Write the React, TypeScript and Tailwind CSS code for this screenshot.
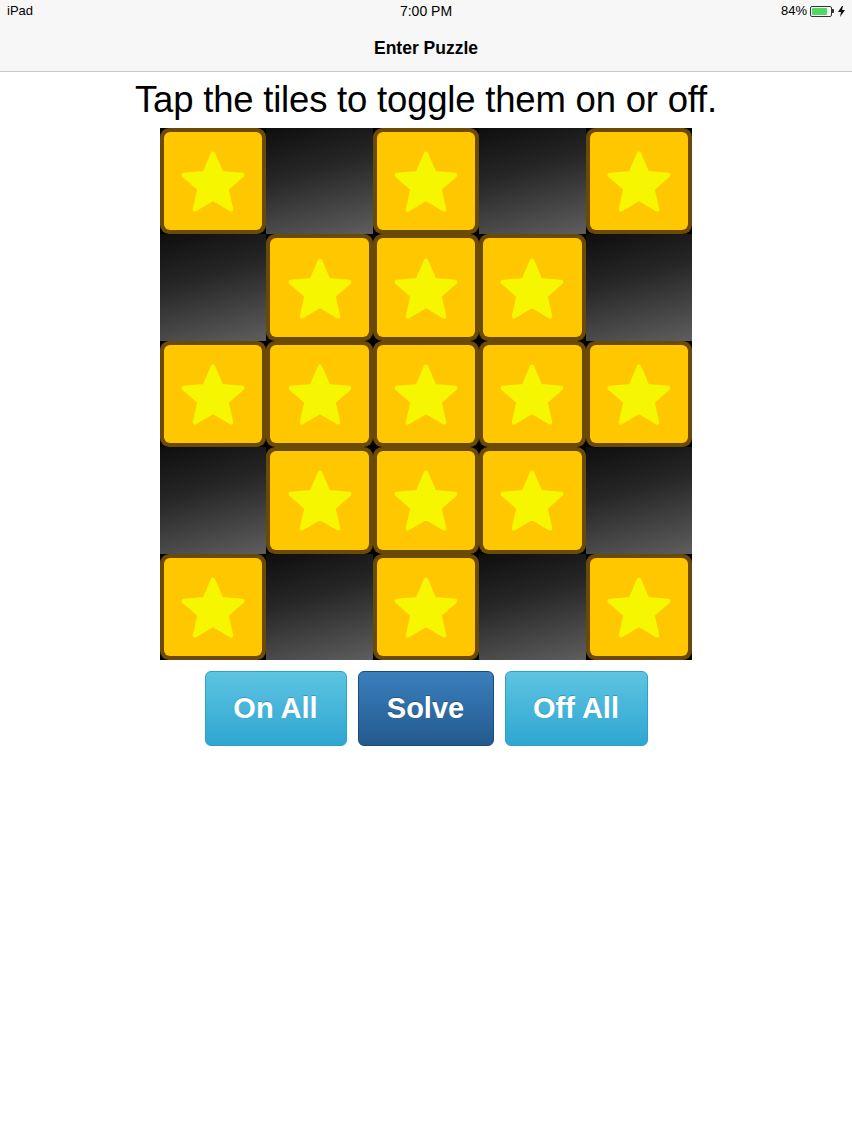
import React from "react";

const grid = [
  [1, 0, 1, 0, 1],
  [0, 1, 1, 1, 0],
  [1, 1, 1, 1, 1],
  [0, 1, 1, 1, 0],
  [1, 0, 1, 0, 1],
];

function Star() {
  return (
    <svg width="64" height="62" viewBox="0 0 100 96" className="mt-[2px]">
      <polygon
        points="50,4 62.9,34.2 95.6,37.2 70.9,58.8 78.2,90.8 50,74 21.8,90.8 29.1,58.8 4.4,37.2 37.1,34.2"
        fill="#f6f600"
        stroke="#f6f600"
        strokeWidth="7"
        strokeLinejoin="round"
      />
    </svg>
  );
}

export default function App() {
  return (
    <div className="min-h-[1136px] w-[852px] bg-white" style={{ fontFamily: '"Liberation Sans", Arial, sans-serif' }}>
      <div className="bg-[#f7f7f7] border-b border-[#c9c9c9]">
        <div className="relative h-[22px] flex items-center justify-between px-[7px] text-[13px] text-black">
          <span>iPad</span>
          <span className="absolute left-1/2 -translate-x-1/2 text-[14px]">7:00 PM</span>
          <div className="flex items-center gap-[3px]">
            <span>84%</span>
            <div className="flex items-center">
              <div className="w-[22px] h-[11px] border border-[#333] rounded-[2px] p-[1px]">
                <div className="w-[84%] h-full bg-[#4cd964] rounded-[1px]"></div>
              </div>
              <div className="w-[2px] h-[4px] bg-[#333] rounded-r-[1px]"></div>
            </div>
            <svg width="7" height="11" viewBox="0 0 7 11" className="ml-[1px]">
              <polygon points="4,0 0,6 3,6 2,11 7,4 4,4 5,0" fill="#111" />
            </svg>
          </div>
        </div>
        <div className="h-[49px] flex items-center justify-center text-[17.5px] font-bold text-black pt-[3px]">
          Enter Puzzle
        </div>
      </div>

      <div className="flex flex-col items-center">
        <div className="mt-[5px] text-[36.5px] leading-[46px] text-black tracking-[-0.2px]">
          Tap the tiles to toggle them on or off.
        </div>
        <div className="mt-[5px] w-[532px] h-[532px] grid grid-cols-5 grid-rows-5 bg-black">
          {grid.flat().map((on, i) =>
            on ? (
              <div key={i} className="bg-black">
                <div className="w-full h-full rounded-[9px] bg-[#6b4a05] p-[4px]">
                  <div className="w-full h-full rounded-[6px] bg-[#ffc700] flex items-center justify-center">
                    <Star />
                  </div>
                </div>
              </div>
            ) : (
              <div
                key={i}
                className="bg-[linear-gradient(165deg,#0e0e0e_0%,#262626_40%,#5e5e5e_100%)]"
              ></div>
            )
          )}
        </div>
        <div className="mt-[11px] flex gap-[11px]">
          <button className="w-[142px] h-[75px] rounded-[6px] border border-[#2aa3cb] bg-[linear-gradient(#5ec4e2,#2ea6d1)] text-white text-[29px] font-bold [text-shadow:0_-1px_0_rgba(0,0,0,0.2)]">
            On All
          </button>
          <button className="w-[136px] h-[75px] rounded-[6px] border border-[#1c4c79] bg-[linear-gradient(#3a7fbd,#245a8d)] text-white text-[29px] font-bold [text-shadow:0_-1px_0_rgba(0,0,0,0.25)]">
            Solve
          </button>
          <button className="w-[143px] h-[75px] rounded-[6px] border border-[#2aa3cb] bg-[linear-gradient(#5ec4e2,#2ea6d1)] text-white text-[29px] font-bold [text-shadow:0_-1px_0_rgba(0,0,0,0.2)]">
            Off All
          </button>
        </div>
      </div>
    </div>
  );
}
